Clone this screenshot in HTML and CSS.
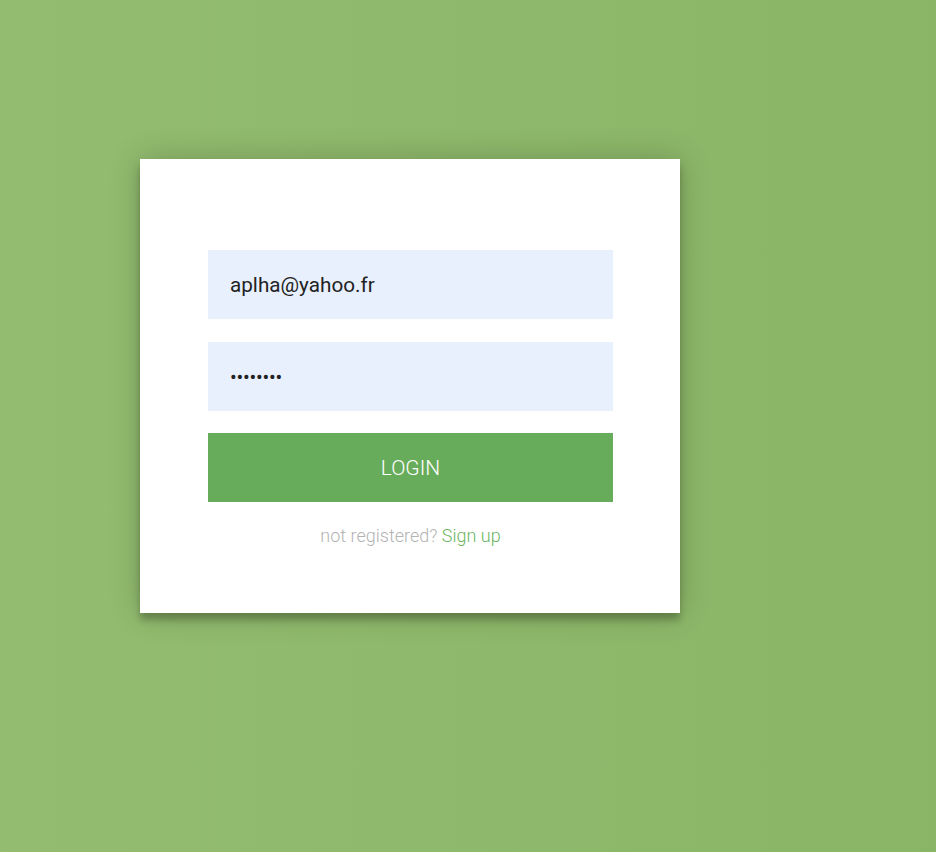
FILE: index.html
```html
<!DOCTYPE html>
<html>
<head>
<meta charset="utf-8">
<link rel="stylesheet" href="styles.css">
</head>
<body>
<div class="page">
  <form class="form">
    <input class="field" type="text" value="aplha@yahoo.fr">
    <input class="field pass" type="password" value="password">
    <button class="btn" type="button">LOGIN</button>
    <p class="message">not registered? <a href="#">Sign up</a></p>
  </form>
</div>
</body>
</html>
```

FILE: styles.css
```css
html, body {
  margin: 0;
  height: 100%;
}
body {
  background: linear-gradient(to right, #93bc70, #8ab566);
  font-family: Roboto, "Liberation Sans", sans-serif;
}
.page {
  padding: 159px 0 0 140px;
}
.form {
  box-sizing: border-box;
  width: 540px;
  height: 454px;
  background: #fff;
  padding: 91px 67px 0 68px;
  display: flex;
  flex-direction: column;
  box-shadow: 0 0 30px 0 rgba(0,0,0,0.2), 0 7px 7px 0 rgba(0,0,0,0.24);
}
.field {
  box-sizing: border-box;
  width: 100%;
  height: 69px;
  margin: 0 0 23px;
  border: 0;
  outline: 0;
  background: #e8f0fe;
  padding: 0 22px;
  font-family: Roboto, "Liberation Sans", sans-serif;
  font-size: 20.7px;
  font-weight: 400;
  color: #222;
}
.pass {
  margin-bottom: 22px;
  font-size: 20px;
  letter-spacing: -0.25px;
}
.btn {
  width: 100%;
  height: 69px;
  border: 0;
  background: #67ac5b;
  color: #fff;
  font-family: Roboto, "Liberation Sans", sans-serif;
  font-weight: 300;
  font-size: 21px;
  padding: 0;
}
.message {
  margin: 23px 0 0;
  text-align: center;
  color: #b3b3b3;
  font-size: 18px;
  font-weight: 300;
  line-height: 22px;
}
.message a {
  color: #6bb55f;
  text-decoration: none;
  font-weight: 300;
}
```
